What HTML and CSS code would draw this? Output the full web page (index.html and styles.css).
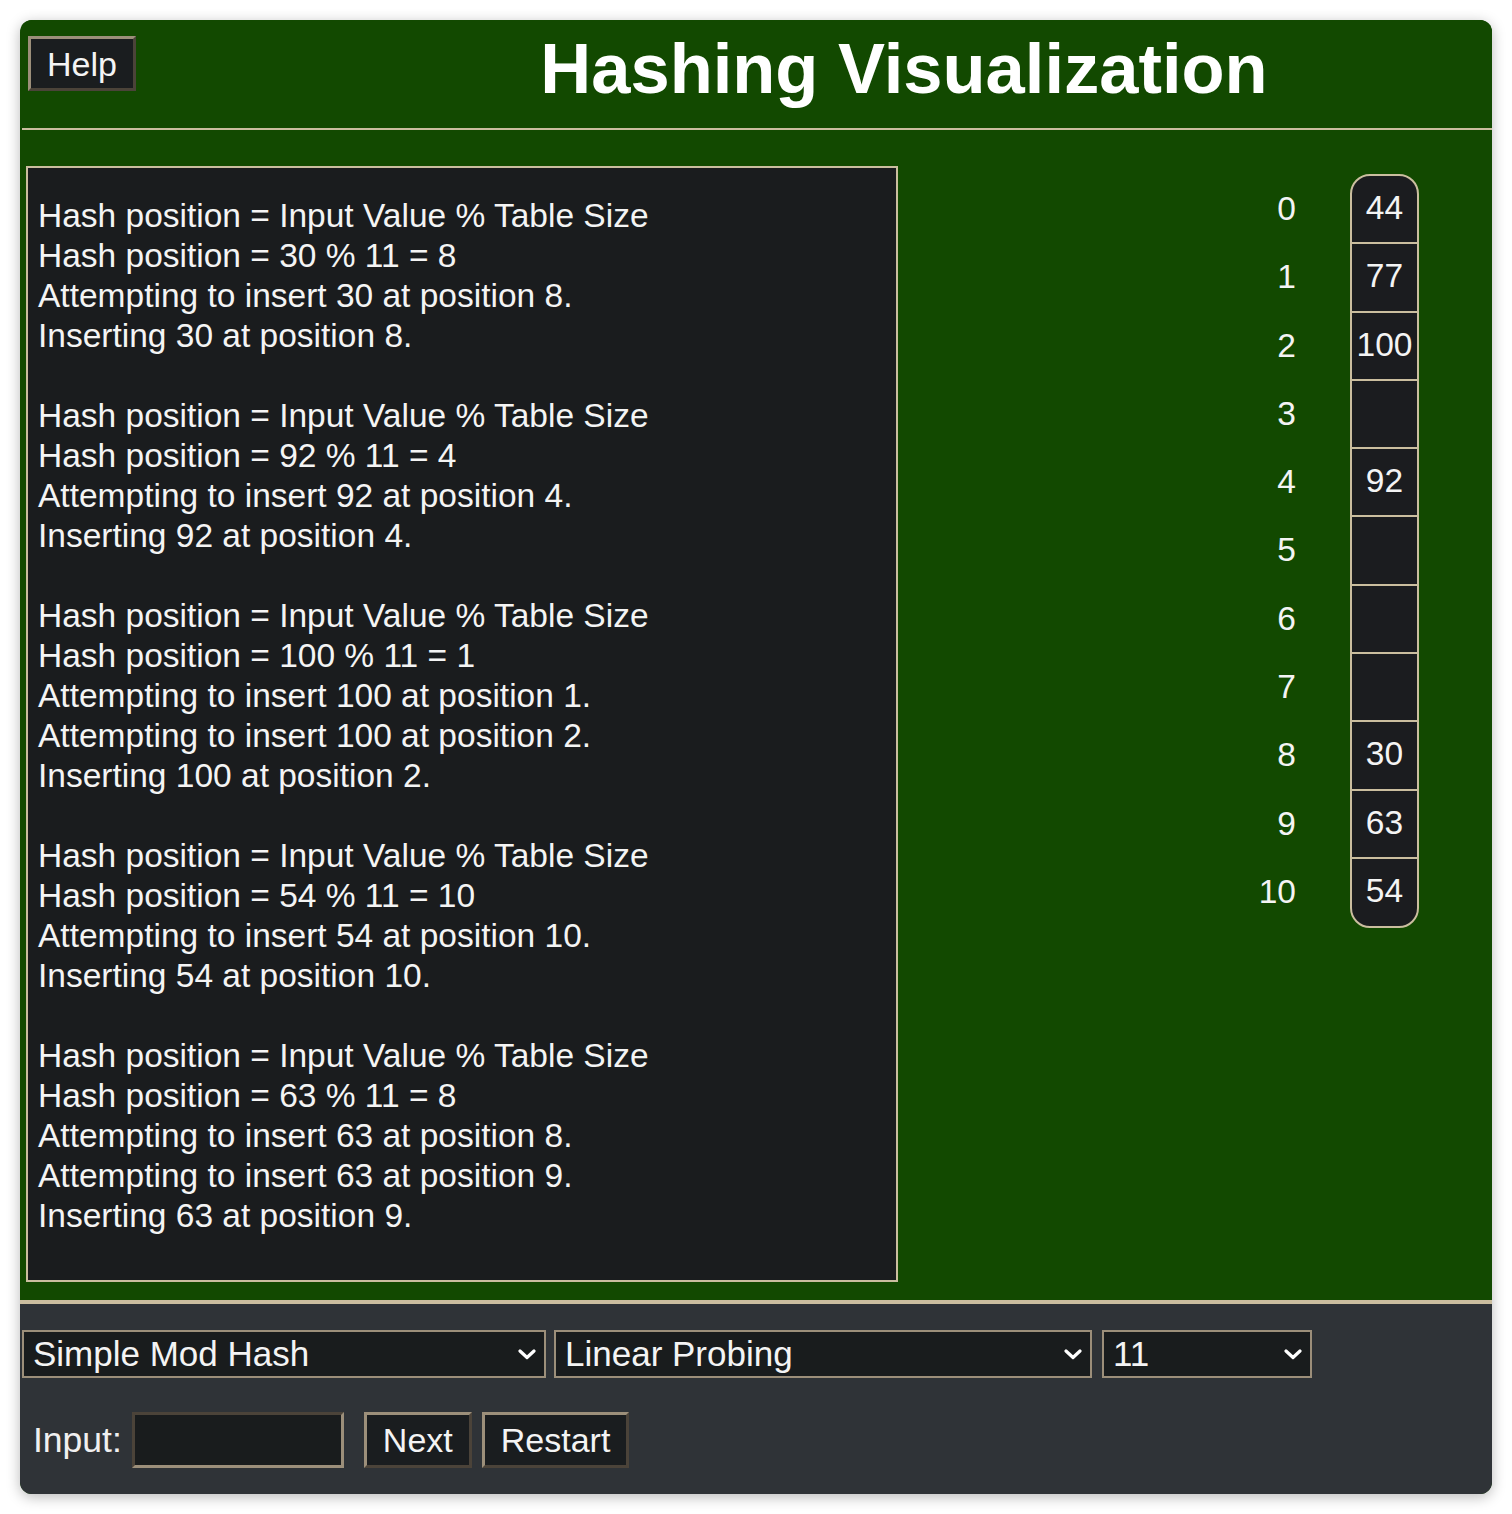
FILE: index.html
```html
<!DOCTYPE html>
<html lang="en">
<head>
<meta charset="utf-8">
<title>Hashing Visualization</title>
<link rel="stylesheet" href="styles.css">
</head>
<body>
<div class="window">
  <header class="header">
    <button class="btn help">Help</button>
    <h1 class="title">Hashing Visualization</h1>
  </header>
  <main class="main">
    <div class="log">
      <div class="entry">
        <div>Hash position = Input Value % Table Size</div>
        <div>Hash position = 30 % 11 = 8</div>
        <div>Attempting to insert 30 at position 8.</div>
        <div>Inserting 30 at position 8.</div>
      </div>
      <div class="entry">
        <div>Hash position = Input Value % Table Size</div>
        <div>Hash position = 92 % 11 = 4</div>
        <div>Attempting to insert 92 at position 4.</div>
        <div>Inserting 92 at position 4.</div>
      </div>
      <div class="entry">
        <div>Hash position = Input Value % Table Size</div>
        <div>Hash position = 100 % 11 = 1</div>
        <div>Attempting to insert 100 at position 1.</div>
        <div>Attempting to insert 100 at position 2.</div>
        <div>Inserting 100 at position 2.</div>
      </div>
      <div class="entry">
        <div>Hash position = Input Value % Table Size</div>
        <div>Hash position = 54 % 11 = 10</div>
        <div>Attempting to insert 54 at position 10.</div>
        <div>Inserting 54 at position 10.</div>
      </div>
      <div class="entry">
        <div>Hash position = Input Value % Table Size</div>
        <div>Hash position = 63 % 11 = 8</div>
        <div>Attempting to insert 63 at position 8.</div>
        <div>Attempting to insert 63 at position 9.</div>
        <div>Inserting 63 at position 9.</div>
      </div>
    </div>
    <div class="table">
      <div class="indices">
        <div class="idx">0</div><div class="idx">1</div><div class="idx">2</div><div class="idx">3</div>
        <div class="idx">4</div><div class="idx">5</div><div class="idx">6</div><div class="idx">7</div>
        <div class="idx">8</div><div class="idx">9</div><div class="idx">10</div>
      </div>
      <div class="cells">
        <div class="cell">44</div><div class="cell">77</div><div class="cell">100</div><div class="cell"></div>
        <div class="cell">92</div><div class="cell"></div><div class="cell"></div><div class="cell"></div>
        <div class="cell">30</div><div class="cell">63</div><div class="cell">54</div>
      </div>
    </div>
  </main>
  <footer class="controls">
    <div class="row selects">
      <div class="sel sel-hash">
        <select><option>Simple Mod Hash</option></select>
        <svg class="chev" viewBox="0 0 18 11" width="18" height="11"><path d="M2 2 L9 8.5 L16 2" fill="none" stroke="#fff" stroke-width="3.2" stroke-linecap="round" stroke-linejoin="round"/></svg>
      </div>
      <div class="sel sel-probe">
        <select><option>Linear Probing</option></select>
        <svg class="chev" viewBox="0 0 18 11" width="18" height="11"><path d="M2 2 L9 8.5 L16 2" fill="none" stroke="#fff" stroke-width="3.2" stroke-linecap="round" stroke-linejoin="round"/></svg>
      </div>
      <div class="sel sel-size">
        <select><option>11</option></select>
        <svg class="chev" viewBox="0 0 18 11" width="18" height="11"><path d="M2 2 L9 8.5 L16 2" fill="none" stroke="#fff" stroke-width="3.2" stroke-linecap="round" stroke-linejoin="round"/></svg>
      </div>
    </div>
    <div class="row inputs">
      <label class="label" for="inp">Input:</label>
      <input id="inp" class="field" type="text">
      <button class="btn next">Next</button>
      <button class="btn restart">Restart</button>
    </div>
  </footer>
</div>
</body>
</html>
```

FILE: styles.css
```css
* { box-sizing: border-box; }

html, body {
  margin: 0;
  padding: 0;
  background: #ffffff;
}

body {
  font-family: "Liberation Sans", Arial, Helvetica, sans-serif;
  color: #f4f4f4;
}

.window {
  margin: 20px;
  width: 1472px;
  height: 1474px;
  border-radius: 12px;
  overflow: hidden;
  box-shadow: 0 3px 14px rgba(0, 0, 0, 0.28);
  display: flex;
  flex-direction: column;
  background: #124900;
}

/* header */
.header {
  height: 110px;
  background: #124900;
  border-bottom: 2px solid #cbbe9f;
  margin-left: 2px;
  display: flex;
  align-items: flex-start;
  padding-left: 6px;
  flex: none;
}

.btn {
  font-family: "Liberation Sans", Arial, Helvetica, sans-serif;
  font-size: 34px;
  color: #f4f4f4;
  background: #1a1d1f;
  border: 3px solid;
  border-color: #9c8f7a #4b4339 #4b4339 #9c8f7a;
  padding: 0 16px;
  height: 56px;
  line-height: 48px;
  cursor: pointer;
}

.help {
  margin-top: 16px;
  height: 55px;
}

.title {
  flex: 1;
  margin: 9px 0 0 0;
  padding-left: 180px;
  text-align: center;
  font-size: 70.5px;
  line-height: 80px;
  font-weight: bold;
  color: #ffffff;
}

/* main */
.main {
  height: 1170px;
  flex: none;
  display: flex;
  align-items: flex-start;
  padding: 36px 73px 0 6px;
  background: #124900;
}

.log {
  width: 872px;
  height: 1116px;
  background: #1a1c1e;
  border: 2px solid #cbbe9f;
  padding: 28px 9px 0 10px;
  font-size: 33.5px;
  line-height: 40px;
  color: #f4f4f4;
}

.entry {
  margin-bottom: 40px;
}

.table {
  margin-left: auto;
  margin-top: 8px;
  display: flex;
  gap: 54px;
}

.indices {
  padding-top: 2px;
  display: flex;
  flex-direction: column;
  width: 60px;
}

.idx {
  height: 68.3px;
  line-height: 66px;
  text-align: right;
  font-size: 33.5px;
  color: #f4f4f4;
}

.cells {
  width: 69px;
  border: 2px solid #cbbe9f;
  border-radius: 20px;
  overflow: hidden;
  background: #1b1c1f;
  display: flex;
  flex-direction: column;
}

.cell {
  height: 68.3px;
  line-height: 64px;
  border-bottom: 2px solid #cbbe9f;
  text-align: center;
  font-size: 33.5px;
  color: #f4f4f4;
}

.cell:last-child {
  border-bottom: none;
  height: 67px;
}

/* controls */
.controls {
  flex: 1;
  background: #2f3337;
  border-top: 4px solid #cbbe9f;
  padding: 26px 0 0 2px;
}

.row {
  display: flex;
  align-items: center;
}

.sel {
  position: relative;
  height: 48px;
}

.sel select {
  appearance: none;
  -webkit-appearance: none;
  width: 100%;
  height: 48px;
  background: #191c1d;
  border: 2px solid #9c8f7a;
  border-radius: 0;
  color: #f4f4f4;
  font-family: "Liberation Sans", Arial, Helvetica, sans-serif;
  font-size: 35px;
  padding: 0 0 0 9px;
  line-height: 44px;
}

.sel .chev {
  position: absolute;
  right: 10px;
  top: 19px;
  pointer-events: none;
}

.sel-hash { width: 524px; }
.sel-probe { width: 538px; margin-left: 8px; }
.sel-size { width: 210px; margin-left: 10px; }

.inputs {
  margin-top: 34px;
  padding-left: 11px;
}

.label {
  font-size: 35.5px;
  color: #f0f0f0;
}

.field {
  width: 212px;
  height: 56px;
  margin-left: 10px;
  background: #191c1d;
  border: 3px solid;
  border-color: #4b4339 #9c8f7a #9c8f7a #4b4339;
  color: #f4f4f4;
  font-size: 30px;
}

.next { margin-left: 20px; }
.restart { margin-left: 10px; }
```
